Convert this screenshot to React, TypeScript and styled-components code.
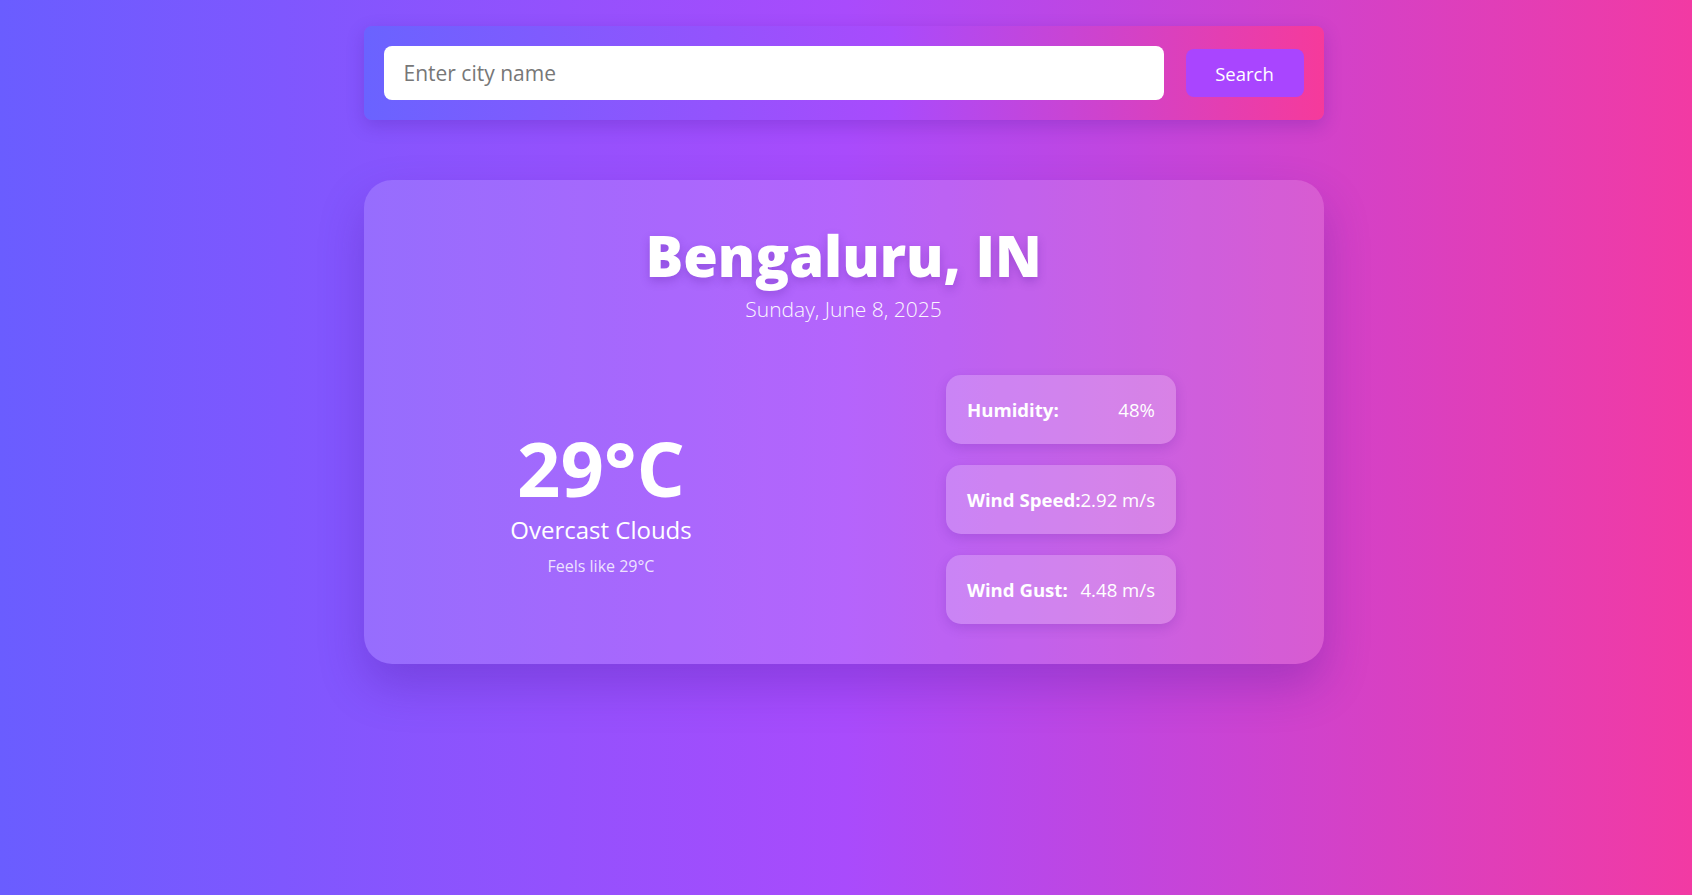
import React from "react";
import styled, { createGlobalStyle } from "styled-components";

const GlobalStyle = createGlobalStyle`
  html, body {
    margin: 0;
    padding: 0;
  }
  body {
    min-height: 100vh;
    font-family: "Segoe UI", "Open Sans", "Noto Sans", sans-serif;
    background: linear-gradient(90deg, #6a5dff 0%, #a94bfc 50%, #f23aa3 100%);
    color: #ffffff;
  }
  * { box-sizing: border-box; }
`;

const Page = styled.main`
  min-height: 100vh;
  display: flex;
  flex-direction: column;
  align-items: center;
  padding: 26px 5px 0 0;
  gap: 60px;
`;

const SearchBar = styled.form`
  width: 960px;
  display: flex;
  align-items: center;
  gap: 22px;
  padding: 20px;
  border-radius: 8px;
  background: linear-gradient(90deg, #6a63ff 0%, #a94bfc 55%, #f63a9b 100%);
  box-shadow: 0 6px 18px rgba(60, 20, 140, 0.22);
`;

const CityInput = styled.input`
  flex: 1;
  height: 54px;
  border: none;
  outline: none;
  border-radius: 8px;
  padding: 0 20px;
  font-family: inherit;
  font-size: 21px;
  color: #333;
  background: #ffffff;
  &::placeholder {
    color: #777777;
  }
`;

const SearchButton = styled.button`
  width: 118px;
  height: 48px;
  border: none;
  border-radius: 8px;
  background: #a945ff;
  color: #ffffff;
  font-family: inherit;
  font-size: 18.5px;
  cursor: pointer;
`;

const Card = styled.section`
  width: 960px;
  padding: 42px 20px 40px;
  border-radius: 28px;
  background: rgba(255, 255, 255, 0.14);
  box-shadow: 0 22px 45px rgba(70, 20, 150, 0.28);
  display: flex;
  flex-direction: column;
  align-items: center;
`;

const City = styled.h1`
  margin: 0;
  font-size: 56px;
  font-weight: 800;
  line-height: 67px;
  text-shadow: 0 4px 10px rgba(90, 30, 160, 0.3);
`;

const DateLine = styled.p`
  margin: 7px 0 0;
  font-size: 21px;
  line-height: 27px;
  font-weight: 300;
  opacity: 0.95;
`;

const Body = styled.div`
  align-self: stretch;
  display: flex;
  justify-content: space-around;
  align-items: center;
  margin-top: 52px;
`;

const Main = styled.div`
  width: 180px;
  display: flex;
  flex-direction: column;
  align-items: center;
  text-align: center;
`;

const Temp = styled.div`
  font-size: 76px;
  font-weight: 700;
  line-height: 1.2;
`;

const Description = styled.div`
  margin-top: 0;
  font-size: 24px;
  line-height: 1.3;
  font-weight: 400;
  white-space: nowrap;
`;

const Feels = styled.div`
  margin-top: 10px;
  font-size: 16px;
  color: rgba(255, 255, 255, 0.82);
  white-space: nowrap;
`;

const Stats = styled.div`
  display: flex;
  flex-direction: column;
  gap: 21px;
`;

const Stat = styled.div`
  height: 69px;
  display: flex;
  align-items: center;
  justify-content: space-between;
  padding: 0 21px;
  border-radius: 15px;
  background: rgba(255, 255, 255, 0.22);
  box-shadow: 0 4px 12px rgba(80, 20, 150, 0.18);
  font-size: 18.6px;
  white-space: nowrap;
`;

const Label = styled.span`
  font-weight: 700;
`;

const Value = styled.span`
  font-weight: 400;
`;

const stats = [
  { label: "Humidity:", value: "48%" },
  { label: "Wind Speed:", value: "2.92 m/s" },
  { label: "Wind Gust:", value: "4.48 m/s" },
];

export default function App() {
  return (
    <>
      <GlobalStyle />
      <Page>
        <SearchBar onSubmit={(e) => e.preventDefault()}>
          <CityInput placeholder="Enter city name" />
          <SearchButton type="submit">Search</SearchButton>
        </SearchBar>
        <Card>
          <City>Bengaluru, IN</City>
          <DateLine>Sunday, June 8, 2025</DateLine>
          <Body>
            <Main>
              <Temp>29°C</Temp>
              <Description>Overcast Clouds</Description>
              <Feels>Feels like 29°C</Feels>
            </Main>
            <Stats>
              {stats.map((s) => (
                <Stat key={s.label}>
                  <Label>{s.label}</Label>
                  <Value>{s.value}</Value>
                </Stat>
              ))}
            </Stats>
          </Body>
        </Card>
      </Page>
    </>
  );
}
